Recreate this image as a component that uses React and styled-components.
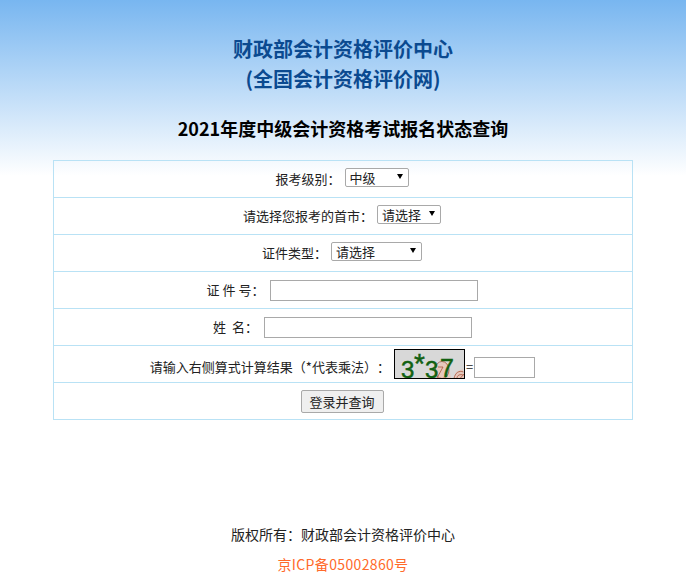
import React from 'react';
import styled, { createGlobalStyle } from 'styled-components';

const GlobalStyle = createGlobalStyle`
    html, body {
        margin: 0;
        padding: 0;
        background: #fff;
    }
    body {
        font-family: "Noto Sans CJK SC", "Liberation Sans", sans-serif;
        color: #222;
        text-spacing-trim: space-all;
    }
`

const Page = styled.div`
    width: 686px;
    height: 580px;
    overflow: hidden;
    background: linear-gradient(to bottom, #78b6f0 0, #ffffff 176px, #ffffff 100%);
    display: flex;
    flex-direction: column;
    align-items: center;
`

const Title = styled.h1`
    margin: 34px 0 0;
    font-size: 20px;
    line-height: 30px;
    font-weight: 700;
    text-align: center;
    color: #0b4a90;
`

const SubTitle = styled.h2`
    margin: 21px 0 0;
    font-size: 18px;
    line-height: 26px;
    font-weight: 700;
    text-align: center;
    color: #000;
`

const Form = styled.div`
    width: 580px;
    margin-top: 19px;
    border: 1px solid #b9e2f5;
    border-bottom: 0;
    box-sizing: border-box;
`

const Row = styled.div`
    height: 37px;
    box-sizing: border-box;
    border-bottom: 1px solid #b9e2f5;
    display: flex;
    align-items: ${props => props.$bottom ? 'flex-end' : 'center'};
    justify-content: center;
    padding-right: ${props => props.$shift || 0}px;
    padding-bottom: ${props => props.$bottom ? 3 : 0}px;
    font-size: 13px;
    white-space: pre;
`

const Label = styled.span`
    margin-right: ${props => props.$gap || 4}px;
    margin-bottom: ${props => props.$lift || 2}px;
    line-height: 19px;
`

const SelectWrap = styled.span`
    position: relative;
    display: inline-flex;
    margin-bottom: 3px;
    &::after {
        content: '';
        position: absolute;
        right: 6px;
        top: 6px;
        border-left: 3.5px solid transparent;
        border-right: 3.5px solid transparent;
        border-top: 5px solid #000;
        pointer-events: none;
    }
`

const Select = styled.select`
    appearance: none;
    width: ${props => props.$width}px;
    height: 19px;
    padding: 0 0 0 4px;
    border: 1px solid #a9a9a9;
    border-radius: 2px;
    background: #fff;
    font-family: inherit;
    font-size: 13px;
    line-height: 17px;
    color: #222;
`

const TextInput = styled.input`
    width: ${props => props.$width}px;
    height: 21px;
    padding: 0;
    margin-bottom: ${props => props.$lift || 0}px;
    box-sizing: border-box;
    border: 1px solid #a9a9a9;
    background: #fff;
`

const Captcha = styled.svg`
    display: block;
    width: 71px;
    height: 31px;
    margin-bottom: -1px;
    margin-right: 1px;
    overflow: visible;
`

const Submit = styled.button`
    width: 83px;
    height: 23px;
    padding: 0;
    border: 1px solid #a9a9a9;
    border-radius: 2px;
    background: #efefef;
    font-family: inherit;
    font-size: 13px;
    line-height: 21px;
    color: #222;
`

const Copyright = styled.div`
    margin-top: 104px;
    font-size: 14px;
    line-height: 20px;
    color: #222;
`

const Icp = styled.div`
    margin-top: 10px;
    font-size: 14px;
    line-height: 20px;
    letter-spacing: 0.35px;
    color: #ff6a2b;
`

const digit = { fontFamily: 'Liberation Sans', fill: '#116111', stroke: '#116111', strokeWidth: 0.5 }

export default function App() {
    return (
        <Page>
            <GlobalStyle />
            <Title>财政部会计资格评价中心<br />(全国会计资格评价网)</Title>
            <SubTitle>2021年度中级会计资格考试报名状态查询</SubTitle>
            <Form>
                <Row $shift={2}>
                    <Label>报考级别：</Label>
                    <SelectWrap>
                        <Select $width={64} defaultValue="中级"><option>中级</option></Select>
                    </SelectWrap>
                </Row>
                <Row $shift={2}>
                    <Label>请选择您报考的首市：</Label>
                    <SelectWrap>
                        <Select $width={64} defaultValue="请选择"><option>请选择</option></Select>
                    </SelectWrap>
                </Row>
                <Row $shift={2}>
                    <Label>证件类型：</Label>
                    <SelectWrap>
                        <Select $width={91} defaultValue="请选择"><option>请选择</option></Select>
                    </SelectWrap>
                </Row>
                <Row $shift={1}>
                    <Label $gap={6}>证 件 号：</Label>
                    <TextInput $width={208} />
                </Row>
                <Row $shift={1}>
                    <Label $gap={6}>姓  名：</Label>
                    <TextInput $width={208} />
                </Row>
                <Row $bottom $shift={1}>
                    <Label $gap={4} $lift={3}>请输入右侧算式计算结果（*代表乘法）：</Label>
                    <Captcha viewBox="0 0 71 31">
                        <rect x="0" y="0" width="71" height="30" fill="#d8d8d8" />
                        <path d="M41 30 L41 18 L50 12 L55 18 L57 30 Z" fill="#e6c8bc" />
                        <path d="M60 30 L62 23 L69 20 L70 30 Z" fill="#e6c8bc" />
                        <g fill="none" stroke="#a8553c" strokeWidth="0.8">
                            <ellipse cx="48" cy="21" rx="7" ry="8.5" />
                            <path d="M43 29 L49 18 L44 18" />
                            <path d="M60 29.5 C61 24 65 21 69.5 23 M63 29.5 C63 26 66 25 69.5 26 M66 29.5 L70 25" />
                        </g>
                        <text x="7" y="29" fontSize="24" style={digit}>3</text>
                        <text x="20" y="24" fontSize="28" style={digit}>*</text>
                        <text x="31" y="29" fontSize="24" style={digit}>3</text>
                        <text x="46" y="28" fontSize="25" style={digit}>7</text>
                        <rect x="0.5" y="0.5" width="70" height="29" fill="none" stroke="#000" />
                    </Captcha>
                    <Label $gap={1} $lift={3}>=</Label>
                    <TextInput $width={61} $lift={1} />
                </Row>
                <Row $shift={2}>
                    <Submit>登录并查询</Submit>
                </Row>
            </Form>
            <Copyright>版权所有：财政部会计资格评价中心</Copyright>
            <Icp>京ICP备05002860号</Icp>
        </Page>
    );
}
